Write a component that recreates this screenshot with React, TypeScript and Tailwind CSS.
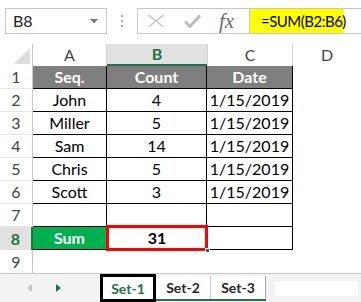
import type { ReactNode } from "react";

const font = { fontFamily: "Lato, 'Open Sans', sans-serif" };

const rows: { a: string; b: string; c: string }[] = [
  { a: "John", b: "4", c: "1/15/2019" },
  { a: "Miller", b: "5", c: "1/15/2019" },
  { a: "Sam", b: "14", c: "1/15/2019" },
  { a: "Chris", b: "5", c: "1/15/2019" },
  { a: "Scott", b: "3", c: "1/15/2019" },
];

function RowHead({ n, active }: { n: number; active?: boolean }) {
  return active ? (
    <div className="h-[23px] flex items-center justify-center bg-[#e1e1e1] border-r-2 border-[#217346] text-[16px] font-bold text-[#217346]">
      {n}
    </div>
  ) : (
    <div className="h-[23px] flex items-center justify-center bg-white border-r border-b border-r-[#c6c6c6] border-b-[#e6e6e6] text-[16px] text-[#444]">
      {n}
    </div>
  );
}

function Cell({ children, className = "" }: { children?: ReactNode; className?: string }) {
  return (
    <div className={`h-[23px] flex items-center justify-center border-r border-b border-black text-[16px] text-black ${className}`}>
      {children}
    </div>
  );
}

export default function App() {
  return (
    <div className="w-[361px] h-[302px] overflow-hidden bg-white flex flex-col" style={font}>
      {/* formula bar */}
      <div className="h-[44px] shrink-0 flex items-start pt-[8px]">
        <div className="ml-[5px] w-[102px] h-[26px] shrink-0 border border-[#c6c6c6] flex items-center justify-between pl-[7px] pr-[8px]">
          <span className="text-[16px] text-[#222]">B8</span>
          <svg width="8" height="5" viewBox="0 0 8 5">
            <polygon points="0,0 8,0 4,4.5" fill="#7a7a7a" />
          </svg>
        </div>
        <div className="w-[30px] shrink-0 flex flex-col items-center gap-[3px] pt-[7px]">
          <div className="w-[2px] h-[2px] bg-[#a6a6a6]" />
          <div className="w-[2px] h-[2px] bg-[#a6a6a6]" />
          <div className="w-[2px] h-[2px] bg-[#a6a6a6]" />
        </div>
        <div className="h-[26px] w-[240px] shrink-0 flex border border-[#c6c6c6]">
          <div className="w-[112px] shrink-0 flex items-center border-r border-[#c6c6c6]">
            <svg className="ml-[9px]" width="18" height="14" viewBox="0 0 18 14">
              <path d="M1.5 1 L16.5 13 M16.5 1 L1.5 13" stroke="#c4c4c4" strokeWidth="1.6" fill="none" />
            </svg>
            <svg className="ml-[19px]" width="17" height="14" viewBox="0 0 17 14">
              <path d="M1 7.5 L6 12.5 L16 1.5" stroke="#b9b9b9" strokeWidth="2.8" fill="none" />
            </svg>
            <span
              className="ml-[18px] text-[21px] italic text-[#6e6e6e] leading-none"
              style={{ fontFamily: "'Liberation Serif', serif" }}
            >
              fx
            </span>
          </div>
          <div className="w-[94px] shrink-0 bg-[#ffff00] flex items-center pl-[11px] text-[15px] tracking-[-0.5px] text-black">
            =SUM(B2:B6)
          </div>
        </div>
      </div>

      {/* sheet */}
      <div className="grid grid-cols-[33px_74px_100px_86px_68px] grid-rows-[22px_repeat(9,23px)] shrink-0">
        {/* column headers */}
        <div className="relative border-r border-[#c6c6c6]">
          <svg className="absolute left-[14px] top-[4px]" width="16" height="16" viewBox="0 0 16 16">
            <polygon points="0,16 16,16 16,0" fill="#dcdcdc" />
          </svg>
        </div>
        <div className="flex items-center justify-center border-r border-[#d4d4d4] text-[16px] text-[#444]">A</div>
        <div className="flex items-center justify-center bg-[#e1e1e1] border-b-2 border-[#217346] text-[16px] font-bold text-[#217346]">B</div>
        <div className="flex items-center justify-center border-l border-r border-[#d4d4d4] text-[16px] text-[#444]">C</div>
        <div className="flex items-center justify-center text-[16px] text-[#444]">D</div>

        {/* row 1 header */}
        <RowHead n={1} />
        <Cell className="bg-[#7f7f7f] text-white font-bold">Seq.</Cell>
        <Cell className="bg-[#7f7f7f] text-white font-bold">Count</Cell>
        <Cell className="bg-[#7f7f7f] text-white font-bold">Date</Cell>
        <div />

        {rows.map((r, i) => (
          <div key={r.a} className="contents">
            <RowHead n={i + 2} />
            <Cell>{r.a}</Cell>
            <Cell>{r.b}</Cell>
            <Cell>{r.c}</Cell>
            <div />
          </div>
        ))}

        {/* row 7 */}
        <RowHead n={7} />
        <Cell />
        <Cell />
        <Cell />
        <div />

        {/* row 8 */}
        <RowHead n={8} active />
        <Cell className="bg-[#00b050] text-white font-bold">Sum</Cell>
        <div className="relative h-[23px] flex items-center justify-center border-b border-black text-[16px] font-bold text-black">
          31
          <div className="absolute -left-[1px] -top-[2px] -right-[1px] -bottom-[2px] border-[3px] border-[#ff0000]" />
          <div className="absolute -right-[3px] -bottom-[4px] w-[5px] h-[5px] bg-[#217346] border border-white" />
        </div>
        <Cell />
        <div />

        {/* row 9 */}
        <div className="h-[23px] flex items-center justify-center border-r border-[#c6c6c6] text-[16px] text-[#444]">9</div>
        <div />
        <div />
        <div />
        <div />
      </div>

      {/* sheet tabs */}
      <div className="flex-1 flex items-stretch bg-[#f3f3f3] border-t border-[#c6c6c6]">
        <div className="w-[100px] shrink-0 flex items-center">
          <svg className="ml-[27px]" width="5" height="8" viewBox="0 0 5 8">
            <polygon points="5,0 5,8 0,4" fill="#c6c6c6" />
          </svg>
          <svg className="ml-[24px]" width="5" height="8" viewBox="0 0 5 8">
            <polygon points="0,0 0,8 5,4" fill="#217346" />
          </svg>
        </div>
        <div className="w-[56px] shrink-0 bg-white border-[3px] border-black flex items-center justify-center text-[14px] font-bold text-[#217346]">
          Set-1
        </div>
        <div className="flex flex-col pt-[2px] pb-[1px]">
          <div className="flex-1 flex border-b-2 border-[#217346]">
            <div className="w-[55px] bg-white border-r border-[#c6c6c6] flex items-center justify-center text-[14px] font-bold text-[#262626]">
              Set-2
            </div>
            <div className="w-[55px] bg-white border-r border-[#a6a6a6] flex items-center justify-center text-[14px] font-bold text-[#262626]">
              Set-3
            </div>
          </div>
        </div>
        <div className="flex items-center pl-[9px]">
          <div className="w-[83px] h-[15px] bg-white" />
        </div>
      </div>
    </div>
  );
}
